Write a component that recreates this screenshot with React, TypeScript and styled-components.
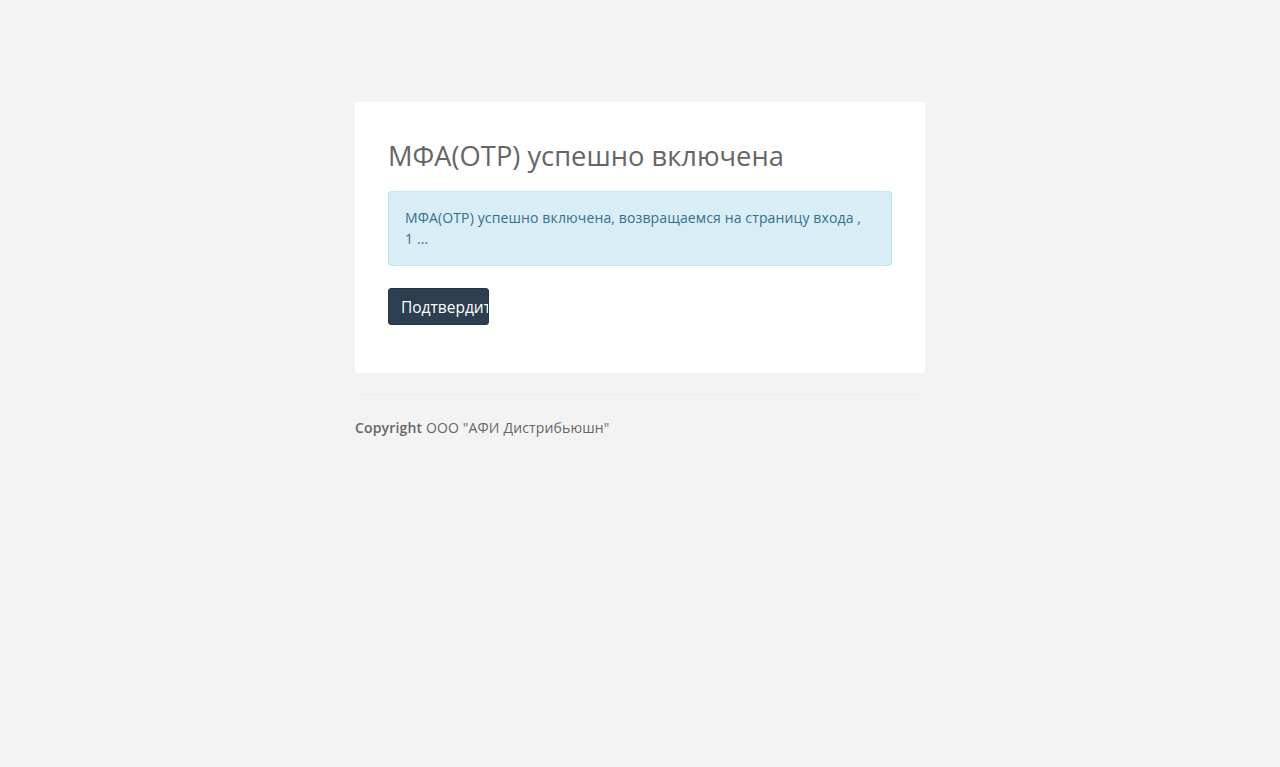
import React from 'react';
import styled, {createGlobalStyle} from 'styled-components';

const GlobalStyle = createGlobalStyle`
    html, body {
        margin: 0;
        padding: 0;
        background: #f3f3f3;
        font-family: "Open Sans", "Noto Sans", sans-serif;
        font-size: 14px;
        color: #666;
    }
`;

const Page = styled.div`
    width: 570px;
    margin: 0 auto;
    padding-top: 102px;
`;

const Card = styled.div`
    background: #fff;
    padding: 33px 33px 48px;
`;

const Title = styled.h2`
    margin: 2px 0 16px;
    font-size: 27.3px;
    font-weight: 400;
    line-height: 38px;
    color: #666;
`;

const Alert = styled.div`
    background: #d9edf7;
    border: 1px solid #bce8f1;
    border-radius: 3px;
    color: #31708f;
    padding: 15px 16px 16px;
    line-height: 21px;
    letter-spacing: 0.13px;
    margin-bottom: 22px;
`;

const ConfirmButton = styled.button`
    display: block;
    width: 101px;
    height: 37px;
    padding: 0 12px;
    overflow: hidden;
    white-space: nowrap;
    text-align: left;
    background: #2c3e50;
    border: 1px solid #273645;
    border-radius: 3px;
    color: #fff;
    font-family: inherit;
    font-size: 15.5px;
`;

const Footer = styled.footer`
    margin-top: 21px;
    border-top: 1px solid #ededed;
    padding-top: 23px;
    line-height: 20px;
    letter-spacing: 0.15px;

    b {
        font-weight: 600;
    }
`;

function App() {
    return (
        <>
            <GlobalStyle/>
            <Page>
                <Card>
                    <Title>МФА(OTP) успешно включена</Title>
                    <Alert>
                        МФА(OTP) успешно включена, возвращаемся на страницу входа ,<br/>1 ...
                    </Alert>
                    <ConfirmButton>Подтвердить</ConfirmButton>
                </Card>
                <Footer>
                    <b>Copyright</b> ООО "АФИ Дистрибьюшн"
                </Footer>
            </Page>
        </>
    );
}

export default App;
